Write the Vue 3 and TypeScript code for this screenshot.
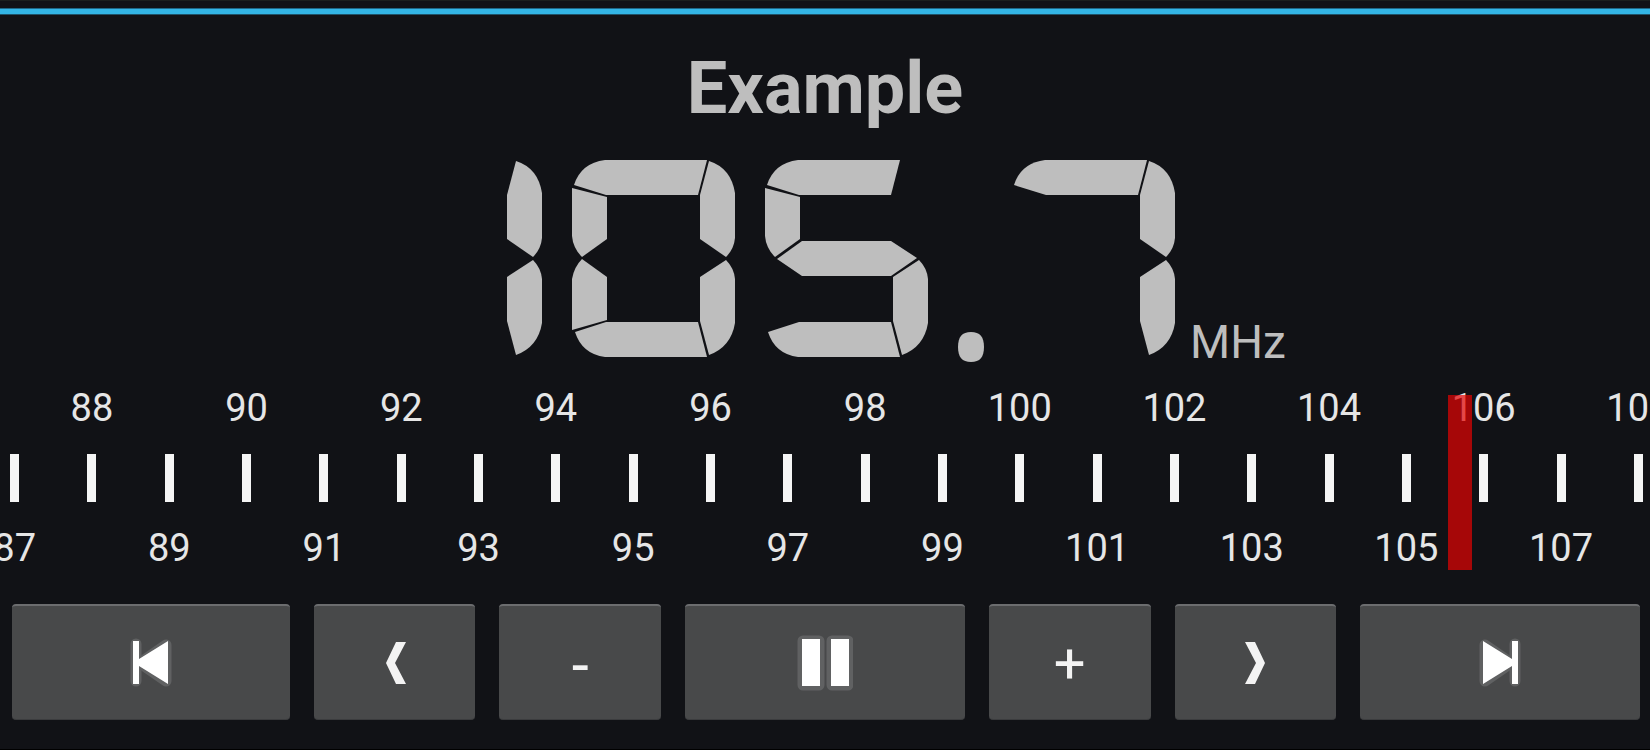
<script setup lang="ts">
import { computed, ref } from 'vue'

const station = ref('Example')
const frequency = ref(105.7)
const playing = ref(true)

const MIN = 87
const MAX = 108
const marks = Array.from({ length: MAX - MIN + 1 }, (_, i) => MIN + i)

const segments: Record<string, string> = {
  a: 'M17 25 Q24 3 48 0 H150 L141 35 H49 Z',
  b: 'M152 1 Q174 8 178 33 V78 Q177 89 169 97 L143 79 V35 Z',
  c: 'M169 100 Q177 108 178 119 V163 Q174 187 152 195 L143 161 V117 Z',
  d: 'M18 172 L49 162 H141 L150 197 H48 Q25 194 18 172 Z',
  e: 'M25 99 L50 117 V160 L15 170 V119 Q17 107 25 99 Z',
  f: 'M15 28 L50 37 V79 L25 97 Q16 88 15 76 Z',
  g: 'M27 99 L52 81 H141 L167 98 L141 116 H52 Z',
}

const lit: Record<string, string> = {
  '0': 'abcdef',
  '1': 'bc',
  '2': 'abged',
  '3': 'abgcd',
  '4': 'fgbc',
  '5': 'afgcd',
  '6': 'afgedc',
  '7': 'abc',
  '8': 'abcdefg',
  '9': 'abcdfg',
}

const readout = computed(() => Number(frequency.value).toFixed(1))
const cells = computed(() => readout.value.split(''))

function tune(step: number) {
  const next = Math.round((Number(frequency.value) + step) * 10) / 10
  frequency.value = Math.min(MAX, Math.max(MIN, next))
}
</script>

<template>
  <main class="radio">
    <div class="accent"></div>

    <h1 class="station">{{ station }}</h1>

    <div class="readout">
      <div class="digits" role="img" :aria-label="readout">
        <template v-for="(cell, i) in cells" :key="i">
          <svg v-if="cell === '.'" class="point" viewBox="0 0 54 202">
            <path d="M28 172 C37 172 41 177 41 187 C41 197 37 202 28 202 C19 202 15 197 15 187 C15 177 19 172 28 172 Z" />
          </svg>
          <svg v-else class="digit" viewBox="0 0 193 202">
            <path v-for="s in lit[cell]" :key="s" :d="segments[s]" />
          </svg>
        </template>
      </div>
      <span class="unit">MHz</span>
    </div>

    <div class="dial">
      <div class="scale">
        <div v-for="m in marks" :key="m" class="mark">
          <span class="label">{{ m % 2 === 0 ? m : '' }}</span>
          <i class="tick"></i>
          <span class="label">{{ m % 2 ? m : '' }}</span>
        </div>
        <input
          v-model.number="frequency"
          class="needle"
          type="range"
          :min="MIN"
          :max="MAX"
          step="0.1"
          aria-label="Frequency"
        />
      </div>
    </div>

    <div class="controls">
      <button type="button" aria-label="Previous station" @click="tune(-1)">
        <svg class="icon" viewBox="0 0 56 56">
          <g class="halo">
            <path d="M13 9 V46" />
            <path d="M43 10 V46 L17 28 Z" />
          </g>
          <path d="M10 6 H16 V24 L45 6 V49 L16 31 V49 H10 Z" />
        </svg>
      </button>
      <button type="button" aria-label="Seek down" @click="tune(-0.5)">
        <svg class="icon soft" viewBox="0 0 56 56">
          <path d="M29 7 H39 L28 28 L39 49 H29 L19 28 Z" />
        </svg>
      </button>
      <button type="button" class="minus" @click="tune(-0.1)">-</button>
      <button type="button" aria-label="Pause" @click="playing = !playing">
        <svg class="icon" viewBox="0 0 56 56">
          <g class="halo">
            <rect x="6" y="6" width="16" height="44" />
            <rect x="35" y="6" width="16" height="44" />
          </g>
          <rect x="5" y="4" width="18" height="47" />
          <rect x="34" y="4" width="18" height="47" />
        </svg>
      </button>
      <button type="button" class="plus" @click="tune(0.1)">+</button>
      <button type="button" aria-label="Seek up" @click="tune(0.5)">
        <svg class="icon soft" viewBox="0 0 56 56">
          <path d="M18 7 H28 L38 28 L28 49 H18 L29 28 Z" />
        </svg>
      </button>
      <button type="button" aria-label="Next station" @click="tune(1)">
        <svg class="icon" viewBox="0 0 56 56">
          <g class="halo">
            <path d="M43 9 V46" />
            <path d="M13 10 V46 L39 28 Z" />
          </g>
          <path d="M46 6 H40 V24 L11 6 V49 L40 31 V49 H46 Z" />
        </svg>
      </button>
    </div>
  </main>
</template>

<style>
body {
  margin: 0;
  background: #111216;
}
</style>

<style scoped>
.radio {
  box-sizing: border-box;
  min-height: 100vh;
  overflow: hidden;
  display: flex;
  flex-direction: column;
  background: #111216;
  border-top: 1px solid #1b1f1d;
  border-bottom: 1px solid #000;
  color: #bebebe;
  font-family: Roboto, "Liberation Sans", sans-serif;
}

.accent {
  height: 5px;
  margin-top: 7px;
  background: #33b5e5;
  border-top: 1px solid #1f6887;
  border-bottom: 1px solid #1f5268;
}

.station {
  margin: 30px 0 0;
  font-size: 72px;
  line-height: 88px;
  font-weight: 700;
  text-align: center;
}

.readout {
  display: flex;
  justify-content: center;
  align-items: flex-end;
  margin-top: 27px;
}

.digits {
  display: flex;
  fill: #bebebe;
}

.digit {
  display: block;
  width: 193px;
  height: 202px;
}

.point {
  display: block;
  width: 54px;
  height: 202px;
}

.unit {
  font-size: 46px;
  line-height: 40px;
}

.dial {
  margin-top: 24px;
}

.scale {
  position: relative;
  display: grid;
  grid-template-columns: repeat(22, minmax(0, 1fr));
  margin: 0 -27px 0 -24px;
}

.mark {
  display: flex;
  flex-direction: column;
  align-items: center;
  gap: 24px;
}

.label {
  height: 44px;
  font-size: 38px;
  line-height: 44px;
  color: #e6e6e6;
}

.tick {
  width: 9px;
  height: 48px;
  background: #f5f5f5;
}

.needle {
  position: absolute;
  top: 9px;
  left: calc(100% / 44 - 12px);
  width: calc(100% * 21 / 22 + 24px);
  height: 175px;
  margin: 0;
  background: transparent;
  appearance: none;
  cursor: pointer;
}

.needle::-webkit-slider-runnable-track {
  height: 175px;
  background: transparent;
}

.needle::-webkit-slider-thumb {
  appearance: none;
  width: 24px;
  height: 175px;
  background: rgba(229, 3, 3, 0.7);
  border: 0;
  border-radius: 0;
}

.controls {
  display: grid;
  grid-template-columns: 278fr 162fr 162fr 280fr 162fr 162fr 280fr;
  gap: 24px;
  margin: 34px 10px 24px 12px;
}

.controls button {
  display: flex;
  align-items: center;
  justify-content: center;
  height: 116px;
  padding: 0;
  border: 0;
  border-top: 2px solid #6c6d6f;
  border-bottom: 1px solid #3b3c3e;
  border-radius: 4px;
  background: #48494a;
  color: #f3f3f3;
  line-height: 64px;
  cursor: pointer;
}

.controls .plus {
  padding-top: 2px;
  font-family: Roboto, sans-serif;
  font-size: 56px;
}

.controls .minus {
  font-family: "Liberation Sans", sans-serif;
  font-size: 60px;
}

.icon {
  width: 56px;
  height: 56px;
  fill: #fff;
}

.soft {
  fill: #f3f3f3;
}

.halo {
  fill: #606162;
  stroke: #606162;
  stroke-width: 11;
  stroke-linejoin: round;
  stroke-linecap: round;
}
</style>
